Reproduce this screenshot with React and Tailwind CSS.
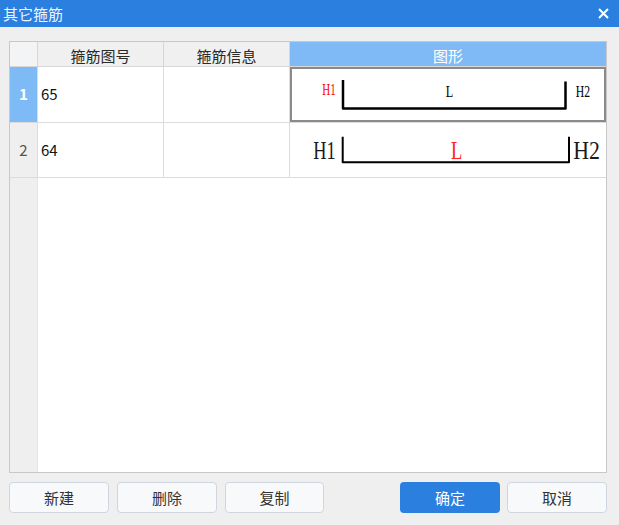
export default function App() {
  const cjk = "font-['Noto_Sans_CJK_SC',sans-serif]";
  return (
    <div className={`w-[619px] h-[525px] bg-[#efefef] flex flex-col overflow-hidden ${cjk}`}>
      <div className="h-[27px] shrink-0 bg-[#2b7fde] flex items-center justify-between pl-[3px] pr-[10px] text-white">
        <span className="text-[15px] leading-none text-[#eef4fc]">其它箍筋</span>
        <svg width="11" height="11" viewBox="0 0 11 11">
          <path d="M1 1L10 10M10 1L1 10" stroke="white" strokeWidth="2" />
        </svg>
      </div>
      <div className="flex-1 flex flex-col pl-[9px] pr-[12px] pt-[14px]">
        <div className="h-[432px] border border-[#c8c8c8] bg-white flex flex-col">
          {/* header */}
          <div className="h-[25px] flex border-b border-[#d6d6d6] bg-[#f0f0f0] text-[15px] text-[#2a2a2a] leading-none">
            <div className="w-[28px] border-r border-[#d6d6d6] bg-[#f3f4f6]" />
            <div className="w-[126px] border-r border-[#d6d6d6] flex items-center justify-center pt-[2px]">箍筋图号</div>
            <div className="w-[126px] border-r border-[#d6d6d6] flex items-center justify-center pt-[2px]">箍筋信息</div>
            <div className="flex-1 bg-[#7fbaf6] text-white flex items-center justify-center pt-[2px]">图形</div>
          </div>
          {/* row 1 */}
          <div className="h-[56px] flex border-b border-[#dcdcdc] text-[15px] text-[#111]">
            <div className="w-[28px] border-r border-[#dcdcdc] bg-[#7ebbf6] text-white font-semibold flex items-center justify-center">1</div>
            <div className="w-[126px] border-r border-[#dcdcdc] flex items-center pl-[3px]">65</div>
            <div className="w-[126px] border-r border-[#dcdcdc]" />
            <div className="flex-1 relative">
              <svg width="316" height="55" viewBox="0 0 316 55" className="block">
                <path d="M53 13 V41.5 H275.5 V14.5" fill="none" stroke="#000" strokeWidth="2.5" strokeLinejoin="round" />
                <text x="32.3" y="27.5" fill="#ff0000" fontFamily="'Liberation Serif', serif" fontSize="16" textLength="13.4" lengthAdjust="spacingAndGlyphs">H1</text>
                <text x="155.7" y="29.5" fill="#000" fontFamily="'Liberation Serif', serif" fontSize="16" textLength="7.5" lengthAdjust="spacingAndGlyphs">L</text>
                <text x="285.7" y="29.5" fill="#000" fontFamily="'Liberation Serif', serif" fontSize="16" textLength="14.3" lengthAdjust="spacingAndGlyphs">H2</text>
              </svg>
              <div className="absolute inset-0 border-2 border-[#8a8a8a] pointer-events-none" />
            </div>
          </div>
          {/* row 2 */}
          <div className="h-[55px] flex border-b border-[#dcdcdc] text-[15px] text-[#111]">
            <div className="w-[28px] border-r border-[#dcdcdc] bg-[#efefef] text-[#555] flex items-center justify-center">2</div>
            <div className="w-[126px] border-r border-[#dcdcdc] flex items-center pl-[3px]">64</div>
            <div className="w-[126px] border-r border-[#dcdcdc]" />
            <div className="flex-1">
              <svg width="316" height="54" viewBox="0 0 316 54" className="block">
                <path d="M52.7 13.7 V39.3 H279 V13.7" fill="none" stroke="#000" strokeWidth="2" strokeLinejoin="round" />
                <text x="23.3" y="35.5" fill="#1a1a1a" fontFamily="'Liberation Serif', serif" fontSize="26" textLength="22.4" lengthAdjust="spacingAndGlyphs">H1</text>
                <text x="161" y="35.5" fill="#ff2020" fontFamily="'Liberation Serif', serif" fontSize="26" textLength="11.3" lengthAdjust="spacingAndGlyphs">L</text>
                <text x="283.3" y="35.5" fill="#1a1a1a" fontFamily="'Liberation Serif', serif" fontSize="26" textLength="26.7" lengthAdjust="spacingAndGlyphs">H2</text>
              </svg>
            </div>
          </div>
          {/* empty area */}
          <div className="flex-1 flex">
            <div className="w-[28px] bg-[#efefef] border-r border-[#e6e6e6]" />
            <div className="flex-1 bg-white" />
          </div>
        </div>
        <div className="mt-[9px] flex justify-between text-[15px]">
          <div className="flex gap-[8px]">
            <button className="w-[100px] h-[31px] rounded-[4px] border border-[#cfd6e0] bg-[#f8f9fb] text-[#333] leading-none">新建</button>
            <button className="w-[100px] h-[31px] rounded-[4px] border border-[#cfd6e0] bg-[#f8f9fb] text-[#333] leading-none">删除</button>
            <button className="w-[99px] h-[31px] rounded-[4px] border border-[#cfd6e0] bg-[#f8f9fb] text-[#333] leading-none">复制</button>
          </div>
          <div className="flex gap-[7px]">
            <button className="w-[100px] h-[31px] rounded-[4px] bg-[#2b7fde] text-white leading-none">确定</button>
            <button className="w-[100px] h-[31px] rounded-[4px] border border-[#cfd6e0] bg-[#f8f9fb] text-[#333] leading-none">取消</button>
          </div>
        </div>
      </div>
    </div>
  );
}
